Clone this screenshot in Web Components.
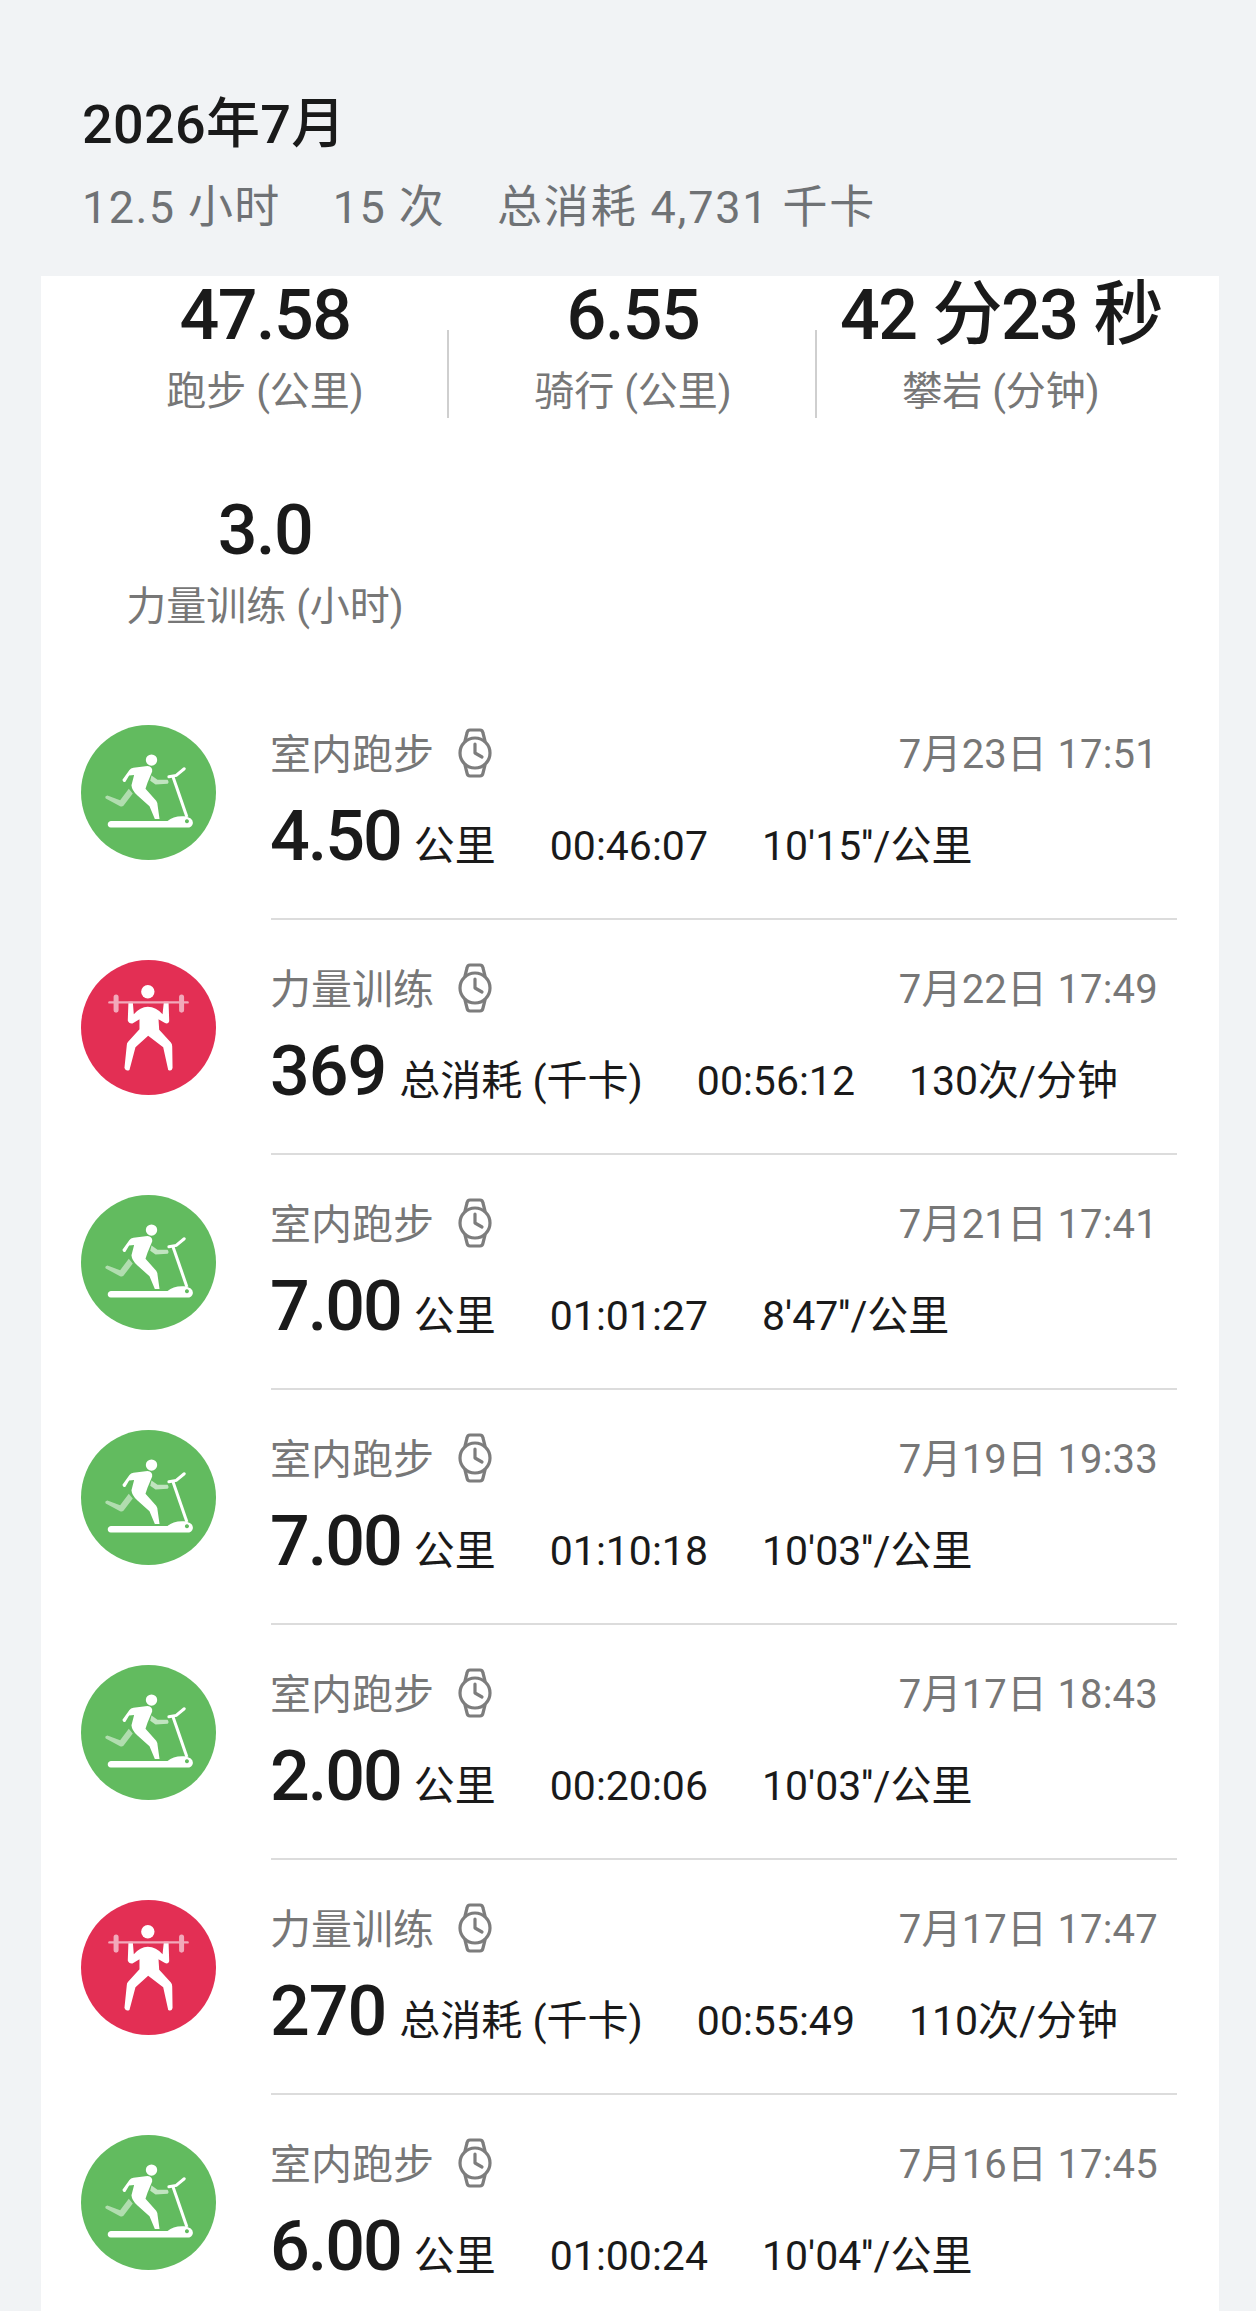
<!DOCTYPE html>
<html lang="zh-CN">
<head>
<meta charset="utf-8">
<title>运动记录</title>
<style>
  html, body { margin: 0; padding: 0; }
  body {
    width: 1256px;
    height: 2311px;
    overflow: hidden;
    background: #f1f3f5;
    font-family: Roboto, "Noto Sans CJK SC", sans-serif;
  }
</style>
</head>
<body>
<month-header title-text="2026年7月">
  <span>12.5 小时</span><span>15 次</span><span style="letter-spacing: 1.8px">总消耗 4,731 千卡</span>
</month-header>
<month-card>
  <stat-grid>
    <stat-item value="47.58" label="跑步 (公里)"></stat-item>
    <stat-item value="6.55" label="骑行 (公里)"></stat-item>
    <stat-item value="42 分23 秒" label="攀岩 (分钟)" last></stat-item>
    <stat-item value="3.0" label="力量训练 (小时)" last></stat-item>
  </stat-grid>
  <workout-row sport="run" name="室内跑步" date="7月23日 17:51" value="4.50" unit="公里" time="00:46:07" extra="10'15''/公里"></workout-row>
  <workout-row sport="lift" name="力量训练" date="7月22日 17:49" value="369" unit="总消耗 (千卡)" time="00:56:12" extra="130次/分钟"></workout-row>
  <workout-row sport="run" name="室内跑步" date="7月21日 17:41" value="7.00" unit="公里" time="01:01:27" extra="8'47''/公里"></workout-row>
  <workout-row sport="run" name="室内跑步" date="7月19日 19:33" value="7.00" unit="公里" time="01:10:18" extra="10'03''/公里"></workout-row>
  <workout-row sport="run" name="室内跑步" date="7月17日 18:43" value="2.00" unit="公里" time="00:20:06" extra="10'03''/公里"></workout-row>
  <workout-row sport="lift" name="力量训练" date="7月17日 17:47" value="270" unit="总消耗 (千卡)" time="00:55:49" extra="110次/分钟"></workout-row>
  <workout-row sport="run" name="室内跑步" date="7月16日 17:45" value="6.00" unit="公里" time="01:00:24" extra="10'04''/公里"></workout-row>
</month-card>

<script>
class MonthHeader extends HTMLElement {
  constructor() {
    super();
    this.root = this.attachShadow({ mode: 'open' });
    this.root.innerHTML = `<style>
        :host { display: block; height: 276px; box-sizing: border-box; padding: 90px 0 0 82px; }
        .title { font-size: 54px; line-height: 70px; color: #1a1a1a; font-weight: 500; letter-spacing: .3px; }
        .sub {
          display: flex;
          gap: 52px;
          margin-top: 20px;
          font-size: 45px;
          line-height: 56px;
          letter-spacing: 1.4px;
          color: #6f7275;
        }
      </style>
      <div class="title">${this.getAttribute('title-text')}</div>
      <div class="sub"><slot></slot></div>`;
  }
}
customElements.define('month-header', MonthHeader);

class MonthCard extends HTMLElement {
  constructor() {
    super();
    this.root = this.attachShadow({ mode: 'open' });
    this.root.innerHTML = `<style>
        :host { display: block; margin: 0 37px 0 41px; background: #fff; padding: 0 42px 0 40px; }
      </style>
      <slot></slot>`;
  }
}
customElements.define('month-card', MonthCard);

class StatGrid extends HTMLElement {
  constructor() {
    super();
    this.root = this.attachShadow({ mode: 'open' });
    this.root.innerHTML = `<style>
        :host {
          display: grid;
          grid-template-columns: repeat(3, 368px);
          row-gap: 73px;
          margin-bottom: 52px;
        }
      </style>
      <slot></slot>`;
  }
}
customElements.define('stat-grid', StatGrid);

class StatItem extends HTMLElement {
  constructor() {
    super();
    this.root = this.attachShadow({ mode: 'open' });
    this.root.innerHTML = `<style>
        :host {
          display: block;
          height: 142px;
          text-align: center;
          background: linear-gradient(#cfcfcf, #cfcfcf) right bottom / 2px 88px no-repeat;
        }
        :host([last]) { background: none; }
        .value { font-size: 70px; line-height: 78px; font-weight: 500; letter-spacing: -1.5px; color: #1a1a1a; white-space: nowrap; }
        .label { font-size: 40px; line-height: 56px; margin-top: 10px; color: #777; white-space: nowrap; }
      </style>
      <div class="value">${this.getAttribute('value')}</div>
      <div class="label">${this.getAttribute('label')}</div>`;
  }
}
customElements.define('stat-item', StatItem);

class SportIcon extends HTMLElement {
  constructor() {
    super();
    this.root = this.attachShadow({ mode: 'open' });
    const run = `
      <path fill="#fff" fill-opacity=".5" d="M206 236 L218 250 L190 287 Q186 290 180 288 L137 265 Q133 258 142 256 L180 270 Z"/>
      <path fill="#fff" fill-opacity=".6" d="M274 196 L292 209 L322 209 Q328 216 322 221 L286 223 L270 212 Z"/>
      <circle cx="274" cy="150" r="17" fill="#fff"/>
      <path fill="#fff" d="M187 209 L208 180 Q212 174 220 173 L262 168 Q278 170 276 184 L262 218 L256 236 L288 272 Q292 278 292 284 L298 326 L284 326 L268 288 L232 256 Q215 240 214 225 L222 195 L207 196 L196 215 Q188 218 187 209 Z"/>
      <path fill="none" stroke="#fff" stroke-width="9" stroke-linecap="round" d="M326 200 L348 196 L372 176"/>
      <path fill="none" stroke="#fff" stroke-width="9" d="M337 196 L380 320"/>
      <path fill="#fff" fill-rule="evenodd" d="M152 332 L322 332 Q340 316 372 318 Q398 322 398 338 Q396 352 380 352 L152 352 Q143 350 143 342 Q143 334 152 332 Z M380 327 a6 6 0 1 0 .1 0 Z"/>`;
    const lift = `
      <circle cx="263" cy="140" r="20" fill="#fff"/>
      <path fill="#fff" d="M205 170 L218 170 L221 207 Q240 186 263 185 Q288 186 307 207 L311 170 L325 170 L327 228 Q324 238 313 233 L295 222 L297 254 L332 292 Q336 296 336 304 L337 368 Q334 380 324 374 L309 306 L264 272 L226 306 L208 374 Q198 380 193 368 L200 300 Q200 294 204 290 L238 252 L238 222 L217 235 Q206 236 203 226 Z"/>
      <path fill="none" stroke="#f2a9ba" stroke-width="7" stroke-linecap="round" d="M148 172 L382 172"/>
      <path fill="none" stroke="#f2a9ba" stroke-width="15" stroke-linecap="round" d="M168 156 L168 195 M364 156 L364 195"/>`;
    const sport = this.getAttribute('sport');
    this.root.innerHTML = `<style>
        :host { display: block; width: 135px; height: 135px; }
        svg { display: block; width: 135px; height: 135px; }
      </style>
      <svg viewBox="63 45 404 404" aria-hidden="true">
        <circle cx="265" cy="247" r="202" fill="${sport === 'lift' ? '#e32f54' : '#62bb5f'}"/>
        ${sport === 'lift' ? lift : run}
      </svg>`;
  }
}
customElements.define('sport-icon', SportIcon);

class WatchIcon extends HTMLElement {
  constructor() {
    super();
    this.root = this.attachShadow({ mode: 'open' });
    this.root.innerHTML = `<style>
        :host { display: block; width: 34px; height: 50px; }
        svg { display: block; }
      </style>
      <svg width="34" height="50" viewBox="0 0 34 50" fill="none" stroke="#7d7d7d" stroke-width="3.200" stroke-linecap="round" stroke-linejoin="round" aria-hidden="true">
        <circle cx="17" cy="25" r="15"/>
        <path d="M7 13 L9 5 Q9.500 2 12 2 L22 2 Q24.500 2 25 5 L27 13"/>
        <path d="M7 37 L9 45 Q9.500 48 12 48 L22 48 Q24.500 48 25 45 L27 37"/>
        <path d="M17 16 L17 25 L24 29"/>
      </svg>`;
  }
}
customElements.define('watch-icon', WatchIcon);

class WorkoutRow extends HTMLElement {
  constructor() {
    super();
    this.root = this.attachShadow({ mode: 'open' });
    const get = name => this.getAttribute(name);
    this.root.innerHTML = `<style>
        :host { display: flex; gap: 55px; height: 235px; box-sizing: border-box; }
        sport-icon { margin-top: 40px; flex: none; }
        .body {
          flex: 1;
          box-sizing: border-box;
          border-bottom: 2px solid #dcdcdc;
          padding: 41px 19px 0 0;
        }
        .top { display: flex; align-items: center; height: 50px; margin-left: -1px; color: #777; font-size: 41px; }
        .top watch-icon { margin: 4px 0 0 24px; }
        .date { margin-left: auto; white-space: nowrap; font-size: 40px; letter-spacing: .2px; }
        .bottom {
          display: flex;
          align-items: baseline;
          gap: 54px;
          margin: 18px 0 0 -1px;
          height: 84px;
          line-height: 84px;
          color: #1a1a1a;
          font-size: 41px;
          white-space: nowrap;
        }
        .main { display: flex; align-items: baseline; gap: 13px; }
        .value { font-size: 70px; font-weight: 500; letter-spacing: -2px; }
        :host([sport="lift"]) .value { letter-spacing: -1px; }
      </style>
      <sport-icon sport="${get('sport')}"></sport-icon>
      <div class="body">
        <div class="top">
          <span>${get('name')}</span>
          <watch-icon></watch-icon>
          <span class="date">${get('date')}</span>
        </div>
        <div class="bottom">
          <div class="main"><span class="value">${get('value')}</span><span>${get('unit')}</span></div>
          <span>${get('time')}</span>
          <span>${get('extra')}</span>
        </div>
      </div>`;
  }
}
customElements.define('workout-row', WorkoutRow);
</script>
</body>
</html>
